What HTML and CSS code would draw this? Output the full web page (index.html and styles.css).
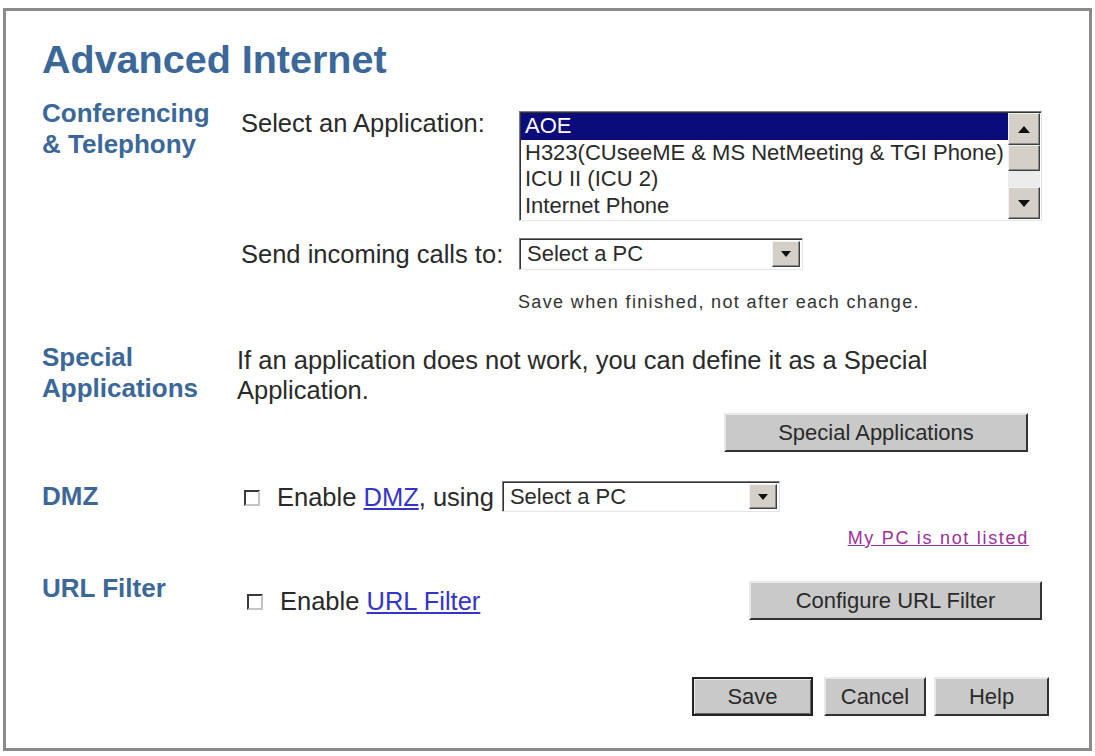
FILE: index.html
```html
<!DOCTYPE html>
<html lang="en">
<head>
    <meta charset="UTF-8">
    <meta name="viewport" content="width=device-width, initial-scale=1.0">
    <title>Advanced Internet</title>
    <link rel="stylesheet" href="styles.css">
</head>
<body>
    <div class="frame">
        <h1 class="title">Advanced Internet</h1>

        <!-- Conferencing & Telephony -->
        <div class="section conf">
            <div class="label">Conferencing<br>&amp; Telephony</div>
            <div class="body conf-body">
                <div class="app-row">
                    <span class="field-name pad">Select an Application:</span>
                    <div class="listbox">
                        <div class="options">
                            <div class="option selected">AOE</div>
                            <div class="option">H323(CUseeME &amp; MS NetMeeting &amp; TGI Phone)</div>
                            <div class="option">ICU II (ICU 2)</div>
                            <div class="option">Internet Phone</div>
                        </div>
                        <div class="scrollbar">
                            <div class="sb-btn">
                                <svg width="12" height="7" viewBox="0 0 12 7"><path d="M6 0 L12 7 L0 7 Z" fill="#111"/></svg>
                            </div>
                            <div class="sb-thumb"></div>
                            <div class="sb-track"></div>
                            <div class="sb-btn">
                                <svg width="12" height="7" viewBox="0 0 12 7"><path d="M0 0 L12 0 L6 7 Z" fill="#111"/></svg>
                            </div>
                        </div>
                    </div>
                </div>
                <div class="call-row">
                    <span class="field-name">Send incoming calls to:</span>
                    <div class="select calls">
                        <span class="select-text">Select a PC</span>
                        <span class="drop">
                            <svg width="10" height="6" viewBox="0 0 10 6"><path d="M0 0 L10 0 L5 6 Z" fill="#111"/></svg>
                        </span>
                    </div>
                </div>
                <p class="note">Save when finished, not after each change.</p>
            </div>
        </div>

        <!-- Special Applications -->
        <div class="section special">
            <div class="label">Special<br>Applications</div>
            <div class="body">
                <p class="text">If an application does not work, you can define it as a Special Application.</p>
                <div class="btn-row">
                    <button class="btn special-btn">Special Applications</button>
                </div>
            </div>
        </div>

        <!-- DMZ -->
        <div class="section dmz">
            <div class="label">DMZ</div>
            <div class="body">
                <div class="check-line">
                    <span class="checkbox"></span>
                    <span class="text">Enable <a href="#" class="link">DMZ</a>, using</span>
                    <div class="select dmz-select">
                        <span class="select-text">Select a PC</span>
                        <span class="drop">
                            <svg width="10" height="6" viewBox="0 0 10 6"><path d="M0 0 L10 0 L5 6 Z" fill="#111"/></svg>
                        </span>
                    </div>
                </div>
                <div class="link-row"><a href="#" class="visited">My PC is not listed</a></div>
            </div>
        </div>

        <!-- URL Filter -->
        <div class="section url">
            <div class="label">URL Filter</div>
            <div class="body url-body">
                <div class="check-line url-line">
                    <span class="checkbox url-check"></span>
                    <span class="text">Enable <a href="#" class="link">URL Filter</a></span>
                    <button class="btn url-btn">Configure URL Filter</button>
                </div>
            </div>
        </div>

        <div class="actions">
            <button class="btn save">Save</button>
            <button class="btn cancel">Cancel</button>
            <button class="btn help">Help</button>
        </div>
    </div>
</body>
</html>
```

FILE: styles.css
```css
body {
    margin: 0;
    font-family: "Liberation Sans", Arial, sans-serif;
    color: #2a2a2a;
    background: #fff;
}

.frame {
    margin: 8px 3px 0 3px;
    height: 743px;
    box-sizing: border-box;
    border: 3px solid #8a8a8a;
    padding: 0 47px 0 36px;
}

.title {
    margin: 26px 0 0;
    font-size: 39.5px;
    line-height: 45px;
    font-weight: bold;
    color: #3b6899;
}

.section {
    display: grid;
    grid-template-columns: 195px 1fr;
}

.label {
    font-size: 26px;
    line-height: 31px;
    font-weight: bold;
    color: #3b6899;
}

.text,
.field-name {
    font-size: 25.5px;
    line-height: 30px;
}

/* conferencing */
.conf {
    margin-top: 16px;
}
.conf-body {
    padding-left: 4px;
}
.app-row {
    display: flex;
    align-items: flex-start;
}
.field-name {
    width: 278px;
    flex: none;
}
.field-name.pad {
    padding-top: 10px;
}

.listbox {
    margin-top: 13px;
    width: 523px;
    height: 110px;
    box-sizing: border-box;
    display: flex;
    border: 1px solid;
    border-color: #7a7a7a #e4e4e4 #e4e4e4 #7a7a7a;
    box-shadow: inset 1px 1px 0 #333;
    padding: 1px;
}
.options {
    flex: 1;
    font-size: 22px;
    line-height: 26.5px;
}
.option {
    padding-left: 4px;
    white-space: nowrap;
}
.option.selected {
    background: #0b0b7c;
    color: #fff;
}

.scrollbar {
    width: 32px;
    display: flex;
    flex-direction: column;
}
.sb-btn,
.sb-thumb {
    box-sizing: border-box;
    background: #d4d0c8;
    border: 1px solid;
    border-color: #f2f2f2 #404040 #404040 #f2f2f2;
    box-shadow: inset -1px -1px 0 #8a8a8a;
}
.sb-btn {
    height: 32px;
    display: flex;
    align-items: center;
    justify-content: center;
}
.sb-thumb {
    height: 26px;
}
.sb-track {
    flex: 1;
    background: #ebebeb;
}

.call-row {
    display: flex;
    align-items: center;
    margin-top: 17px;
}

.select {
    box-sizing: border-box;
    display: flex;
    align-items: center;
    background: #fff;
    border: 1px solid;
    border-color: #7a7a7a #e4e4e4 #e4e4e4 #7a7a7a;
    box-shadow: inset 1px 1px 0 #333;
    padding: 2px;
}
.select-text {
    flex: 1;
    padding-left: 5px;
    font-size: 22px;
}
.drop {
    width: 28px;
    align-self: stretch;
    box-sizing: border-box;
    display: flex;
    align-items: center;
    justify-content: center;
    background: #d4d0c8;
    border: 1px solid;
    border-color: #f2f2f2 #404040 #404040 #f2f2f2;
    box-shadow: inset -1px -1px 0 #8a8a8a;
}
.select.calls {
    width: 284px;
    height: 32px;
}

.note {
    margin: 21px 0 0 277px;
    font-size: 18px;
    line-height: 22px;
    letter-spacing: 1.35px;
    color: #333;
}

/* special applications */
.special {
    margin-top: 29px;
}
.special .text {
    margin: 0;
    padding-top: 3px;
}
.btn-row {
    display: flex;
    justify-content: flex-end;
    margin-top: 8px;
}

.btn {
    font-family: "Liberation Sans", Arial, sans-serif;
    font-size: 22px;
    color: #2a2a2a;
    height: 39px;
    padding: 0;
    background: #c9c9c9;
    border: 2px solid;
    border-color: #e8e8e8 #333 #333 #e8e8e8;
}
.special-btn {
    width: 304px;
    margin-right: 14px;
}

/* dmz */
.dmz {
    margin-top: 29px;
}
.check-line {
    display: flex;
    align-items: center;
    height: 31px;
}
.checkbox {
    width: 16px;
    height: 16px;
    box-sizing: border-box;
    flex: none;
    margin: 2px 17px 0 7px;
    border: 2px solid;
    border-color: #3a3a3a #c4c4c4 #c4c4c4 #3a3a3a;
    background: #fff;
}
.link {
    color: #3434c8;
}
.dmz-select {
    width: 278px;
    height: 31px;
    margin-left: 8px;
}
.link-row {
    text-align: right;
    margin: 15px 13px 0 0;
    font-size: 18px;
    line-height: 22px;
    letter-spacing: 1.7px;
}
.visited {
    color: #9c2f9c;
}

/* url filter */
.url {
    margin-top: 24px;
}
.url-body {
    padding-top: 8px;
}
.url-line {
    height: 39px;
}
.url-check {
    margin-left: 10px;
}
.url-btn {
    width: 293px;
    margin-left: auto;
}

/* bottom buttons */
.actions {
    display: flex;
    justify-content: flex-end;
    margin: 57px -7px 0 0;
}
.save {
    width: 121px;
    border-color: #222;
    box-shadow: inset 1px 1px 0 #e8e8e8, inset -1px -1px 0 #666;
}
.cancel {
    width: 102px;
    margin-left: 11px;
}
.help {
    width: 115px;
    margin-left: 8px;
}
```
